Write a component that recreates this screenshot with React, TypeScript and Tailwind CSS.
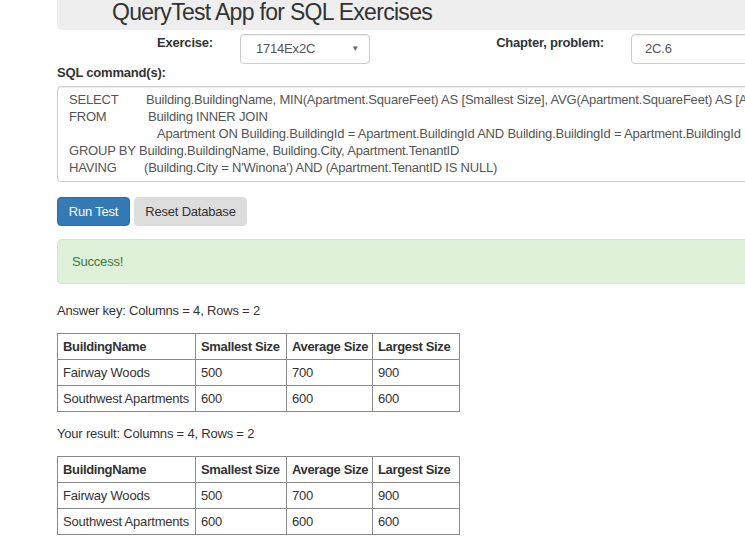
import React from "react";

const rows = [
  { name: "Fairway Woods", min: "500", avg: "700", max: "900" },
  { name: "Southwest Apartments", min: "600", avg: "600", max: "600" },
];

function ResultTable() {
  const cell = "border border-[#8a8a8a] px-[5px] h-[26px] leading-[17px] text-left align-middle whitespace-nowrap overflow-hidden";
  return (
    <table className="ml-[57px] border-collapse table-fixed w-[402px]">
      <colgroup>
        <col className="w-[138px]" />
        <col className="w-[91px]" />
        <col className="w-[86px]" />
        <col className="w-[87px]" />
      </colgroup>
      <thead>
        <tr>
          <th className={`${cell} font-bold tracking-[-0.35px]`}>BuildingName</th>
          <th className={`${cell} font-bold tracking-[-0.35px]`}>Smallest Size</th>
          <th className={`${cell} font-bold tracking-[-0.35px]`}>Average Size</th>
          <th className={`${cell} font-bold tracking-[-0.35px]`}>Largest Size</th>
        </tr>
      </thead>
      <tbody>
        {rows.map((r) => (
          <tr key={r.name}>
            <td className={cell}>{r.name}</td>
            <td className={cell}>{r.min}</td>
            <td className={cell}>{r.avg}</td>
            <td className={cell}>{r.max}</td>
          </tr>
        ))}
      </tbody>
    </table>
  );
}

export default function App() {
  return (
    <div className="w-[745px] h-[539px] overflow-hidden bg-white text-[#333] text-[13px] tracking-[-0.2px] font-['Liberation_Sans',Arial,sans-serif]">
      <div className="w-[1000px]">
        {/* header */}
        <div className="ml-[57px] h-[30px] bg-[#eeeeee] rounded-bl-md pl-[55px]">
          <h1 className="text-[23px] leading-[24px] tracking-[-0.7px] font-normal">
            QueryTest App for SQL Exercises
          </h1>
        </div>

        {/* exercise row */}
        <div className="flex items-start">
          <div className="w-[213px] text-right font-bold leading-[17px] pt-[4px]">Exercise:</div>
          <div className="ml-[27px] mt-[4px] w-[130px] h-[30px] border border-[#ccc] rounded-[4px] flex items-center justify-between pl-[15px] pr-[10px] text-[#555] shadow-[inset_0_1px_1px_rgba(0,0,0,0.075)]">
            <span>1714Ex2C</span>
            <span className="text-[8px] text-[#666]">▼</span>
          </div>
          <div className="w-[234px] text-right font-bold leading-[17px] pt-[4px]">Chapter, problem:</div>
          <div className="ml-[27px] mt-[4px] w-[200px] h-[30px] border border-[#ccc] rounded-[4px] flex items-center pl-[13px] text-[#555] shadow-[inset_0_1px_1px_rgba(0,0,0,0.075)]">
            2C.6
          </div>
        </div>

        <div className="ml-[57px] font-bold leading-[17px]">SQL command(s):</div>

        {/* sql box */}
        <div className="ml-[57px] mt-[5px] w-[900px] h-[96px] border border-[#ccc] rounded-[4px] pl-[11px] pt-[4px] leading-[17px] text-[#555] whitespace-nowrap shadow-[inset_0_1px_1px_rgba(0,0,0,0.075)]">
          <div>
            <span className="inline-block w-[77px]">SELECT</span>
            Building.BuildingName, MIN(Apartment.SquareFeet) AS [Smallest Size], AVG(Apartment.SquareFeet) AS [Average Size], MAX(Apartment.SquareFeet) AS [Largest Size]
          </div>
          <div>
            <span className="inline-block w-[79px]">FROM</span>
            Building INNER JOIN
          </div>
          <div className="pl-[88px]">
            Apartment ON Building.BuildingId = Apartment.BuildingId AND Building.BuildingId = Apartment.BuildingId
          </div>
          <div>GROUP BY Building.BuildingName, Building.City, Apartment.TenantID</div>
          <div>
            <span className="inline-block w-[75px]">HAVING</span>
            (Building.City = N'Winona') AND (Apartment.TenantID IS NULL)
          </div>
        </div>

        {/* buttons */}
        <div className="ml-[57px] mt-[15px] flex gap-[4px]">
          <button type="button" className="w-[73px] h-[29px] bg-[#337ab7] border border-[#2e6da4] rounded-[4px] text-white">
            Run Test
          </button>
          <button type="button" className="w-[113px] h-[29px] bg-[#dddddd] border border-[#dddddd] rounded-[4px] text-[#333]">
            Reset Database
          </button>
        </div>

        {/* alert */}
        <div className="ml-[57px] mt-[13px] w-[900px] h-[45px] bg-[#dff0d8] border border-[#d6e9c6] rounded-[4px] pl-[14px] flex items-center text-[#3c763d]">
          Success!
        </div>

        <div className="ml-[57px] mt-[18px] leading-[17px]">Answer key: Columns = 4, Rows = 2</div>
        <div className="mt-[14px]">
          <ResultTable />
        </div>

        <div className="ml-[57px] mt-[13px] leading-[17px]">Your result: Columns = 4, Rows = 2</div>
        <div className="mt-[14px]">
          <ResultTable />
        </div>
      </div>
    </div>
  );
}
